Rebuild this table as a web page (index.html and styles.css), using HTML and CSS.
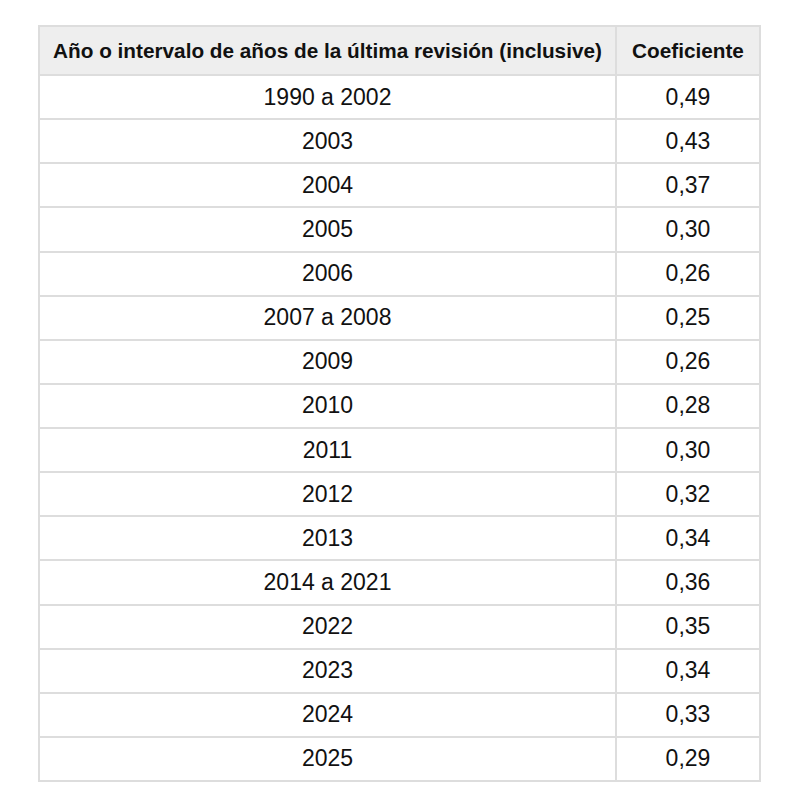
FILE: index.html
```html
<!DOCTYPE html>
<html lang="es">
<head>
<meta charset="utf-8">
<link rel="stylesheet" href="styles.css">
</head>
<body>
<table class="coef">
  <thead>
    <tr><th>Año o intervalo de años de la última revisión (inclusive)</th><th>Coeficiente</th></tr>
  </thead>
  <tbody>
    <tr><td>1990 a 2002</td><td>0,49</td></tr>
    <tr><td>2003</td><td>0,43</td></tr>
    <tr><td>2004</td><td>0,37</td></tr>
    <tr><td>2005</td><td>0,30</td></tr>
    <tr><td>2006</td><td>0,26</td></tr>
    <tr><td>2007 a 2008</td><td>0,25</td></tr>
    <tr><td>2009</td><td>0,26</td></tr>
    <tr><td>2010</td><td>0,28</td></tr>
    <tr><td>2011</td><td>0,30</td></tr>
    <tr><td>2012</td><td>0,32</td></tr>
    <tr><td>2013</td><td>0,34</td></tr>
    <tr><td>2014 a 2021</td><td>0,36</td></tr>
    <tr><td>2022</td><td>0,35</td></tr>
    <tr><td>2023</td><td>0,34</td></tr>
    <tr><td>2024</td><td>0,33</td></tr>
    <tr><td>2025</td><td>0,29</td></tr>
  </tbody>
</table>
</body>
</html>
```
FILE: styles.css
```css
html, body {
  margin: 0;
  padding: 0;
  background: #fff;
}
body {
  font-family: "Liberation Sans", Arial, sans-serif;
  color: #111;
  padding: 25px 0 0 38px;
}
.coef {
  border-collapse: collapse;
  width: 723px;
}
.coef th, .coef td {
  border: 2px solid #ddd;
  text-align: center;
  padding: 0 12px;
}
.coef th {
  background: #eee;
  font-weight: bold;
  font-size: 20.75px;
  height: 47px;
}
.coef th:last-child, .coef td:last-child {
  width: 118px;
}
.coef td {
  font-size: 23px;
  height: 42.13px;
}
```
